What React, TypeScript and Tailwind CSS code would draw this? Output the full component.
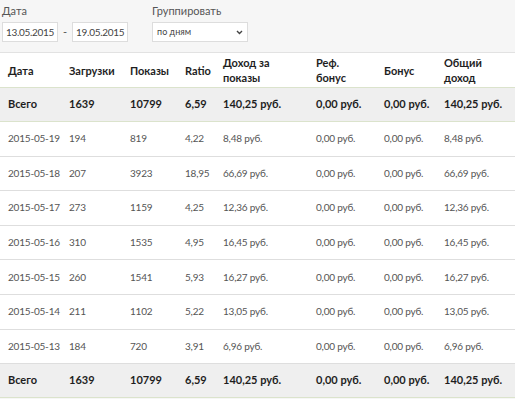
const rows = [
  ["2015-05-19", "194", "819", "4,22", "8,48 руб.", "0,00 руб.", "0,00 руб.", "8,48 руб."],
  ["2015-05-18", "207", "3923", "18,95", "66,69 руб.", "0,00 руб.", "0,00 руб.", "66,69 руб."],
  ["2015-05-17", "273", "1159", "4,25", "12,36 руб.", "0,00 руб.", "0,00 руб.", "12,36 руб."],
  ["2015-05-16", "310", "1535", "4,95", "16,45 руб.", "0,00 руб.", "0,00 руб.", "16,45 руб."],
  ["2015-05-15", "260", "1541", "5,93", "16,27 руб.", "0,00 руб.", "0,00 руб.", "16,27 руб."],
  ["2015-05-14", "211", "1102", "5,22", "13,05 руб.", "0,00 руб.", "0,00 руб.", "13,05 руб."],
  ["2015-05-13", "184", "720", "3,91", "6,96 руб.", "0,00 руб.", "0,00 руб.", "6,96 руб."],
];

const total = ["Всего", "1639", "10799", "6,59", "140,25 руб.", "0,00 руб.", "0,00 руб.", "140,25 руб."];

const widths = ["w-[61px]", "w-[61px]", "w-[55px]", "w-[38px]", "w-[93px]", "w-[68px]", "w-[60px]", "w-[79px]"];

const headers = [["Дата"], ["Загрузки"], ["Показы"], ["Ratio"], ["Доход за", "показы"], ["Реф.", "бонус"], ["Бонус"], ["Общий", "доход"]];

function TotalRow() {
  return (
    <tr className="h-[34px] bg-[#efefef] border-y border-[#dbe3cc]">
      {total.map((c, i) => (
        <td key={i} className="pl-2 font-bold text-[#1e1e1e] whitespace-nowrap">{c}</td>
      ))}
    </tr>
  );
}

export default function App() {
  return (
    <div className="w-[515px] h-[399px] overflow-hidden bg-[#f6f6f6] text-[11px] font-['Lato','Open_Sans',sans-serif]">
      <div className="flex gap-6 pl-[2px] pt-[3px] h-[52px]">
        <div>
          <div className="text-[11px] text-[#555] leading-4">Дата</div>
          <div className="flex items-center mt-[3px]">
            <div className="w-[56px] h-[20px] bg-white border border-[#ddd] text-[#444] text-[10px] tracking-[-0.3px] flex items-center pl-[3px]">13.05.2015</div>
            <span className="mx-[5px] text-[#555]">-</span>
            <div className="w-[56px] h-[20px] bg-white border border-[#ddd] text-[#444] text-[10px] tracking-[-0.3px] flex items-center pl-[3px]">19.05.2015</div>
          </div>
        </div>
        <div>
          <div className="text-[11px] text-[#555] leading-4">Группировать</div>
          <div className="mt-[3px] w-[96px] h-[20px] bg-white border border-[#ddd] text-[#444] text-[9px] flex items-center justify-between px-1">
            <span>по дням</span>
            <svg width="7" height="5" viewBox="0 0 7 5"><path d="M1 1l2.5 2.5L6 1" stroke="#444" strokeWidth="1.4" fill="none" /></svg>
          </div>
        </div>
      </div>
      <table className="w-[515px] table-fixed bg-white border-t border-[#e2e2e2] border-collapse">
        <colgroup>
          {widths.map((w, i) => <col key={i} className={w} />)}
        </colgroup>
        <thead>
          <tr className="h-[35px]">
            {headers.map((h, i) => (
              <th key={i} className="pl-2 pr-1 text-left font-bold text-[#1e1e1e] leading-[15px] align-middle whitespace-nowrap">
                {h.map((line, j) => <div key={j}>{line}</div>)}
              </th>
            ))}
          </tr>
        </thead>
        <tbody>
          <TotalRow />
          {rows.map((r) => (
            <tr key={r[0]} className="h-[34.6px] border-b border-[#dedede]">
              {r.map((c, i) => (
                <td key={i} className="pl-2 text-[#555] text-[10px] tracking-[-0.2px] whitespace-nowrap">{c}</td>
              ))}
            </tr>
          ))}
          <TotalRow />
        </tbody>
      </table>
    </div>
  );
}
